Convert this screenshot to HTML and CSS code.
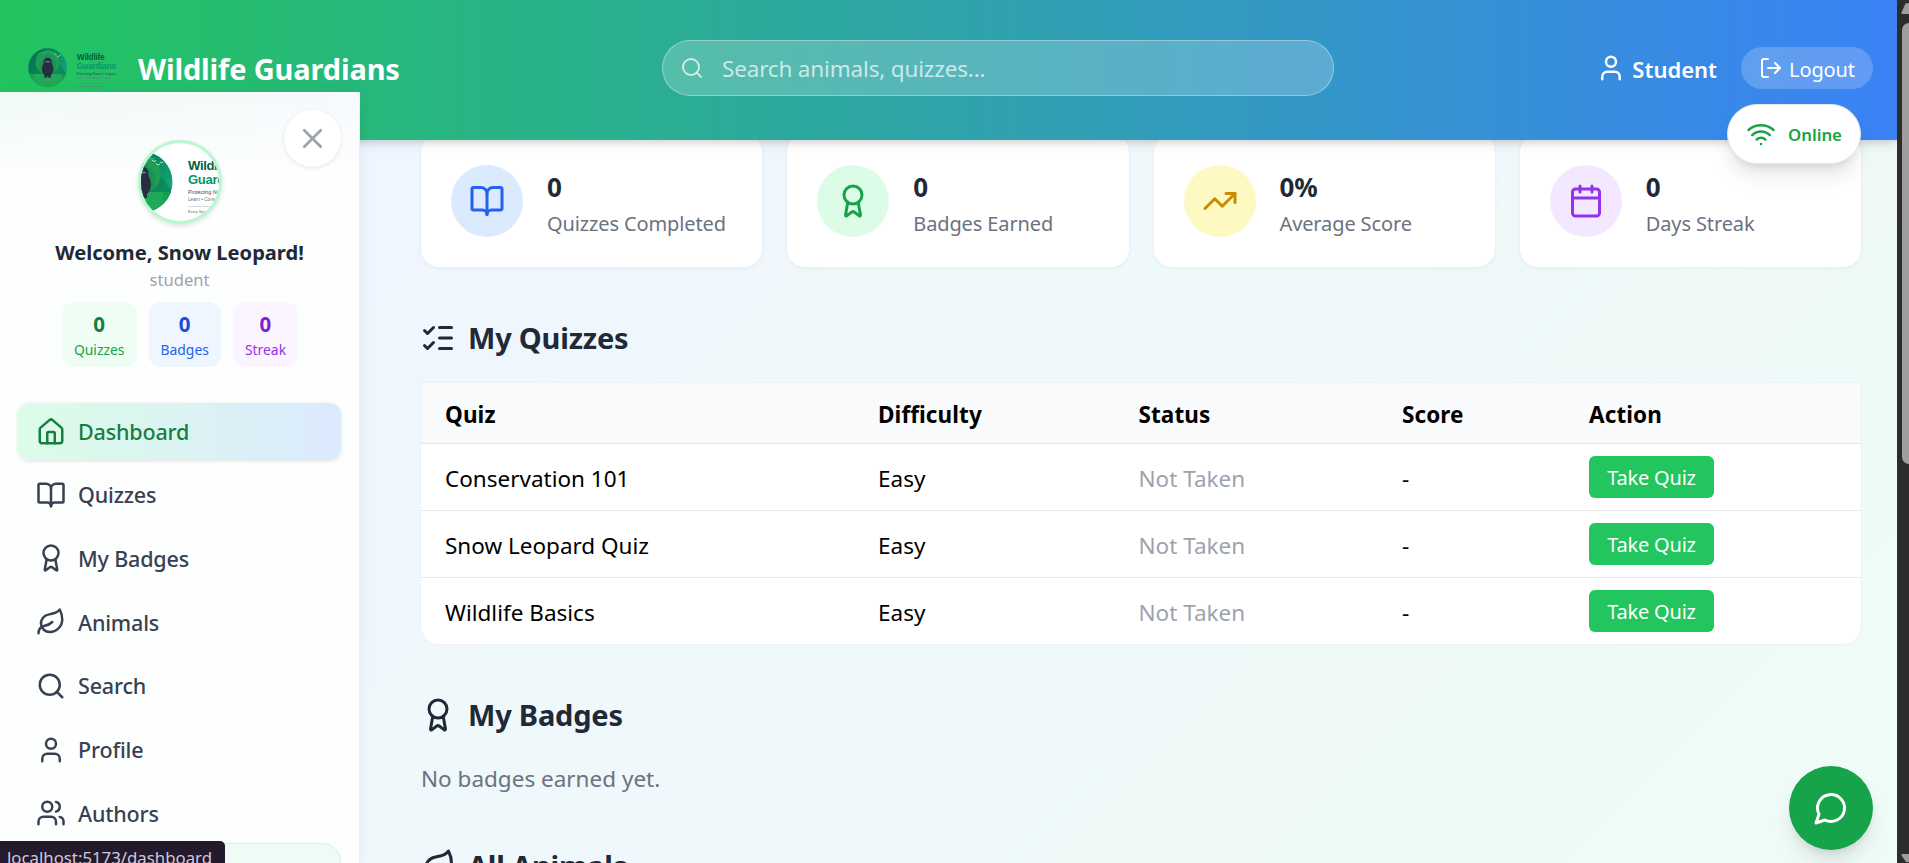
FILE: index.html
```html
<!DOCTYPE html>
<html lang="en">
<head>
<meta charset="utf-8">
<title>Wildlife Guardians</title>
<link rel="stylesheet" href="styles.css">
</head>
<body>
<svg class="defs" aria-hidden="true">
  <defs>
    <linearGradient id="ring" x1="0" y1="0" x2="1" y2="0.6">
      <stop offset="0" stop-color="#066a4d"/><stop offset="0.55" stop-color="#08875f"/><stop offset="1" stop-color="#12a87c"/>
    </linearGradient>
    <linearGradient id="land" x1="0" y1="0" x2="0" y2="1">
      <stop offset="0" stop-color="#159a52"/><stop offset="1" stop-color="#22a957"/>
    </linearGradient>
    <clipPath id="disc"><circle cx="31" cy="31" r="30.5"/></clipPath>
  </defs>
  <symbol id="logo" viewBox="0 0 145 64">
    <g clip-path="url(#disc)">
      <rect width="62" height="62" fill="url(#ring)"/>
      <path d="M0 41 12 27l9 12L31 3l12 28 6-7 13 18v20H0z" fill="#0a8153" opacity=".7"/>
      <circle cx="31" cy="23" r="19" fill="#1f9d55"/>
      <path d="M18 23 31 9l13 14v18H18z" fill="#168c4b" opacity=".5"/>
      <path d="M0 41h62v21H0z" fill="url(#land)"/>
      <path d="M10 41h42v21H10z" fill="#22a957"/>
    </g>
    <path d="m15 10 6-3 4 1 6-4 8 4 5-1" fill="none" stroke="#5cbf91" stroke-width=".7"/>
    <path d="m41 9 2 1.500 2-1m0 3 2 1.500 2-1m0-2 1.500 1 1.500-1" fill="none" stroke="#d5efe2" stroke-width=".9"/>
    <ellipse cx="31" cy="33" rx="9" ry="12" fill="#272e42"/>
    <circle cx="31" cy="22" r="6.500" fill="#272e42"/>
    <path d="M26 40h4v7h-4zM32 40h4v7h-4z" fill="#272e42"/>
    <path d="M27.500 21.500h7" stroke="#8790a3" stroke-width="1.600"/>
    <text x="77" y="18.500" class="logo-name logo-dark">Wildlife</text>
    <text x="77" y="32.500" class="logo-name logo-mid">Guardians</text>
    <text x="77" y="42.500" class="logo-tag">Protecting Nature's Legacy</text>
    <text x="77" y="49.500" class="logo-line">Learn • Conserve • Inspire</text>
    <path d="M77 55.500h62" stroke="#6b7280" stroke-opacity=".35" stroke-width=".8"/>
    <text x="77" y="61.500" class="logo-small">Every Species Matters</text>
  </symbol>
  <symbol id="search" viewBox="0 0 24 24"><path d="m21 21-4.340-4.340"/><circle cx="11" cy="11" r="8"/></symbol>
  <symbol id="user" viewBox="0 0 24 24"><path d="M19 21v-2a4 4 0 0 0-4-4H9a4 4 0 0 0-4 4v2"/><circle cx="12" cy="7" r="4"/></symbol>
  <symbol id="users" viewBox="0 0 24 24"><path d="M16 21v-2a4 4 0 0 0-4-4H6a4 4 0 0 0-4 4v2"/><path d="M16 3.128a4 4 0 0 1 0 7.744"/><path d="M22 21v-2a4 4 0 0 0-3-3.870"/><circle cx="9" cy="7" r="4"/></symbol>
  <symbol id="logout" viewBox="0 0 24 24"><path d="m16 17 5-5-5-5"/><path d="M21 12H9"/><path d="M9 21H5a2 2 0 0 1-2-2V5a2 2 0 0 1 2-2h4"/></symbol>
  <symbol id="wifi" viewBox="0 0 24 24"><path d="M12 20h.01"/><path d="M2 8.820a15 15 0 0 1 20 0"/><path d="M5 12.859a10 10 0 0 1 14 0"/><path d="M8.500 16.429a5 5 0 0 1 7 0"/></symbol>
  <symbol id="close" viewBox="0 0 24 24"><path d="M18 6 6 18"/><path d="m6 6 12 12"/></symbol>
  <symbol id="house" viewBox="0 0 24 24"><path d="M15 21v-8a1 1 0 0 0-1-1h-4a1 1 0 0 0-1 1v8"/><path d="M3 10a2 2 0 0 1 .709-1.528l7-5.999a2 2 0 0 1 2.582 0l7 5.999A2 2 0 0 1 21 10v9a2 2 0 0 1-2 2H5a2 2 0 0 1-2-2z"/></symbol>
  <symbol id="book" viewBox="0 0 24 24"><path d="M12 7v14"/><path d="M3 18a1 1 0 0 1-1-1V4a1 1 0 0 1 1-1h5a4 4 0 0 1 4 4 4 4 0 0 1 4-4h5a1 1 0 0 1 1 1v13a1 1 0 0 1-1 1h-6a3 3 0 0 0-3 3 3 3 0 0 0-3-3z"/></symbol>
  <symbol id="award" viewBox="0 0 24 24"><path d="m15.477 12.890 1.515 8.526a.5.5 0 0 1-.81.470l-3.580-2.687a1 1 0 0 0-1.197 0l-3.586 2.686a.5.5 0 0 1-.81-.469l1.514-8.526"/><circle cx="12" cy="8" r="6"/></symbol>
  <symbol id="leaf" viewBox="0 0 24 24"><path d="M11 20A7 7 0 0 1 9.800 6.100C15.500 5 17 4.480 19 2c1 2 2 4.180 2 8 0 5.500-4.780 10-10 10Z"/><path d="M2 21c0-3 1.850-5.360 5.080-6C9.500 14.520 12 13 13 12"/></symbol>
  <symbol id="trend" viewBox="0 0 24 24"><path d="M16 7h6v6"/><path d="m22 7-8.500 8.500-5-5L2 17"/></symbol>
  <symbol id="calendar" viewBox="0 0 24 24"><path d="M8 2v4"/><path d="M16 2v4"/><rect width="18" height="18" x="3" y="4" rx="2"/><path d="M3 10h18"/></symbol>
  <symbol id="checks" viewBox="0 0 24 24"><path d="M13 5h8"/><path d="M13 12h8"/><path d="M13 19h8"/><path d="m3 17 2 2 4-4"/><path d="m3 7 2 2 4-4"/></symbol>
  <symbol id="message" viewBox="0 0 24 24"><path d="M7.900 20A9 9 0 1 0 4 16.100L2 22Z"/></symbol>
</svg>

<div class="app">
  <div class="page">
    <header class="topbar">
      <div class="brand">
        <svg class="brand-logo"><use href="#logo"/></svg>
        <span class="brand-name">Wildlife Guardians</span>
      </div>
      <div class="searchbox">
        <svg class="icon icon-24"><use href="#search"/></svg>
        <span>Search animals, quizzes...</span>
      </div>
      <div class="account">
        <svg class="icon icon-30"><use href="#user"/></svg>
        <span class="role">Student</span>
        <button class="logout"><svg class="icon icon-24"><use href="#logout"/></svg><span>Logout</span></button>
      </div>
    </header>

    <main class="content">
      <section class="cards">
        <article class="card"><div class="bubble blue"><svg class="icon icon-36"><use href="#book"/></svg></div><div class="card-text"><strong>0</strong><span>Quizzes Completed</span></div></article>
        <article class="card"><div class="bubble green"><svg class="icon icon-36"><use href="#award"/></svg></div><div class="card-text"><strong>0</strong><span>Badges Earned</span></div></article>
        <article class="card"><div class="bubble yellow"><svg class="icon icon-36"><use href="#trend"/></svg></div><div class="card-text"><strong>0%</strong><span>Average Score</span></div></article>
        <article class="card"><div class="bubble purple"><svg class="icon icon-36"><use href="#calendar"/></svg></div><div class="card-text"><strong>0</strong><span>Days Streak</span></div></article>
      </section>

      <h2 class="heading"><svg class="icon icon-36"><use href="#checks"/></svg>My Quizzes</h2>
      <div class="table">
        <div class="row head"><span>Quiz</span><span>Difficulty</span><span>Status</span><span>Score</span><span>Action</span></div>
        <div class="row"><span>Conservation 101</span><span>Easy</span><span class="muted">Not Taken</span><span>-</span><button class="take">Take Quiz</button></div>
        <div class="row"><span>Snow Leopard Quiz</span><span>Easy</span><span class="muted">Not Taken</span><span>-</span><button class="take">Take Quiz</button></div>
        <div class="row"><span>Wildlife Basics</span><span>Easy</span><span class="muted">Not Taken</span><span>-</span><button class="take">Take Quiz</button></div>
      </div>

      <h2 class="heading"><svg class="icon icon-36"><use href="#award"/></svg>My Badges</h2>
      <p class="empty">No badges earned yet.</p>

      <h2 class="heading"><svg class="icon icon-36"><use href="#leaf"/></svg>All Animals</h2>
    </main>
  </div>

  <div class="scrollbar">
    <svg class="arrow" viewBox="0 0 12 12"><path d="M8.500 1.500 12 1V12H5.500Q4 12 4.500 10.500Z"/></svg>
    <div class="thumb"></div>
    <svg class="arrow arrow-down" viewBox="0 0 12 12"><path d="M5.500 3H12V11H9L4.500 4.500Q4.500 3 5.500 3Z"/></svg>
  </div>
</div>

<aside class="sidebar">
  <button class="close"><svg class="icon icon-33"><use href="#close"/></svg></button>
  <div class="profile">
    <div class="avatar"><svg class="avatar-logo"><use href="#logo"/></svg></div>
    <div class="welcome">Welcome, Snow Leopard!</div>
    <div class="kind">student</div>
    <div class="stats">
      <div class="stat stat-green"><b>0</b><span>Quizzes</span></div>
      <div class="stat stat-blue"><b>0</b><span>Badges</span></div>
      <div class="stat stat-purple"><b>0</b><span>Streak</span></div>
    </div>
  </div>
  <nav class="nav">
    <a class="item active"><svg class="icon icon-30"><use href="#house"/></svg>Dashboard</a>
    <a class="item"><svg class="icon icon-30"><use href="#book"/></svg>Quizzes</a>
    <a class="item"><svg class="icon icon-30"><use href="#award"/></svg>My Badges</a>
    <a class="item"><svg class="icon icon-30"><use href="#leaf"/></svg>Animals</a>
    <a class="item"><svg class="icon icon-30"><use href="#search"/></svg>Search</a>
    <a class="item"><svg class="icon icon-30"><use href="#user"/></svg>Profile</a>
    <a class="item"><svg class="icon icon-30"><use href="#users"/></svg>Authors</a>
  </nav>
  <div class="tip"></div>
</aside>

<div class="online"><svg class="icon icon-30"><use href="#wifi"/></svg><span>Online</span></div>
<button class="chat"><svg class="icon icon-36"><use href="#message"/></svg></button>
<div class="linkbar">localhost:5173/dashboard</div>
</body>
</html>
```
FILE: styles.css
```css
* { box-sizing: border-box; }

body {
  margin: 0;
  height: 863px;
  overflow: hidden;
  position: relative;
  font-family: "Noto Sans", "Open Sans", sans-serif;
  color: #000;
}

button { border: 0; padding: 0; font: inherit; color: inherit; }

.defs { position: absolute; width: 0; height: 0; }

.icon {
  flex: none;
  fill: none;
  stroke: currentColor;
  stroke-width: 2;
  stroke-linecap: round;
  stroke-linejoin: round;
}
.icon-24 { width: 24px; height: 24px; }
.icon-30 { width: 30px; height: 30px; }
.icon-33 { width: 33px; height: 33px; }
.icon-36 { width: 36px; height: 36px; }

.logo-name { font: bold 13.1px "Liberation Sans", sans-serif; letter-spacing: -.35px; }
.logo-dark { fill: #065f46; }
.logo-mid { fill: #059669; }
.logo-tag { font: italic 5.2px "Liberation Sans", sans-serif; fill: #374151; }
.logo-line { font: 4.7px "Liberation Sans", sans-serif; fill: #6b7280; }
.logo-small { font: 3.8px "Liberation Sans", sans-serif; fill: #6b7280; }

.app { display: flex; height: 863px; overflow: hidden; }
.page {
  position: relative;
  flex: 1;
  overflow: hidden;
  background: linear-gradient(135deg, #eff6ff 24%, #eff8fb 42%, #eff8fa 60%, #eefbf6 88%);
}

/* Top bar */
.topbar {
  position: absolute;
  inset: 0 0 auto 0;
  z-index: 2;
  height: 140px;
  padding: 0 24px 4px 28px;
  display: grid;
  grid-template-columns: 634px 672px 1fr;
  align-items: center;
  background: linear-gradient(to right, #22c55e, #3b82f6);
  box-shadow: 0 6px 9px -1px rgba(0, 0, 0, .1), 0 3px 6px -2px rgba(0, 0, 0, .1);
  color: #fff;
}
.brand { display: flex; align-items: center; gap: 18px; }
.brand-logo { width: 92px; height: 40.600px; }
.brand-name { font-size: 29px; font-weight: 700; letter-spacing: -.15px; line-height: 40px; padding-top: 2px; }
.searchbox {
  height: 56px;
  display: flex;
  align-items: center;
  gap: 18px;
  padding: 0 17px;
  border: 1px solid rgba(255, 255, 255, .35);
  border-radius: 28px;
  background: rgba(255, 255, 255, .2);
  color: rgba(255, 255, 255, .7);
  font-size: 22.500px;
  letter-spacing: -.17px;
}
.searchbox span { padding-top: 1px; }
.account { display: flex; align-items: center; justify-content: flex-end; }
.role { font-size: 22px; font-weight: 600; margin: 0 24px 0 6px; padding-top: 1px; }
.logout {
  height: 42px;
  display: flex;
  align-items: center;
  gap: 6px;
  padding: 0 18px;
  border-radius: 21px;
  background: rgba(255, 255, 255, .2);
  font-size: 20px;
  letter-spacing: -.1px;
}
.logout span { padding-top: 2px; }

/* Dashboard */
.content { padding: 134px 36px 0 421px; }
.cards { display: grid; grid-template-columns: repeat(4, 1fr); gap: 25px; }
.card {
  height: 133px;
  display: flex;
  align-items: center;
  gap: 24px;
  padding: 0 30px;
  border-radius: 18px;
  background: #fff;
  box-shadow: 0 1px 4px rgba(0, 0, 0, .06);
}
.bubble { width: 72px; height: 72px; border-radius: 50%; display: grid; place-items: center; flex: none; }
.blue { background: #dbeafe; color: #2563eb; }
.green { background: #dcfce7; color: #16a34a; }
.yellow { background: #fef9c3; color: #ca8a04; }
.purple { background: #f3e8ff; color: #9333ea; }
.card-text { display: flex; flex-direction: column; padding-top: 10px; line-height: 36.500px; white-space: nowrap; }
.card-text strong { font-size: 26px; color: #1f2937; letter-spacing: 0; }
.card-text span { font-size: 20px; letter-spacing: -.12px; color: #6b7280; }

.heading {
  margin: 52px 0 0 -1px;
  display: flex;
  align-items: center;
  gap: 12px;
  line-height: 37px;
  font-size: 29px;
  font-weight: 700;
  letter-spacing: -.2px;
  color: #1f2937;
}
.table {
  margin-top: 27px;
  height: 261px;
  border-radius: 0 0 18px 18px;
  background: #fff;
  box-shadow: 0 0 0 1px #edf2f5;
  font-size: 22.500px;
}
.row {
  height: 67px;
  display: grid;
  grid-template-columns: 433px 260.500px 263.500px 187px 125px;
  align-items: center;
  padding-left: 24px;
  border-bottom: 1px solid #e5e7eb;
}
.row:last-child { border-bottom: 0; height: 66px; }
.row span { padding-top: 2px; letter-spacing: 0; }
.head { height: 61px; background: #f9fafb; font-weight: 700; }
.row.head span { padding-top: 3px; letter-spacing: .1px; }
.row .muted { color: #9ca3af; }
.take {
  height: 42px;
  border-radius: 6px;
  background: #22c55e;
  color: #fff;
  font-size: 20px;
  letter-spacing: -.2px;
  line-height: 40px;
  padding-top: 2px;
}
.empty { margin: 28px 0 0; font-size: 22.500px; line-height: 36px; color: #6b7280; }
.empty + .heading { margin-top: 50px; }

/* Window scrollbar */
.scrollbar { width: 12px; background: #2c2c2c; padding: 2px 0 0; display: flex; flex-direction: column; }
.arrow { width: 12px; height: 12px; fill: #9e9e9e; flex: none; }
.thumb { margin: 9px 0 0 5px; height: 444px; border-radius: 8px 0 0 8px; background: #9e9e9e; }
.arrow-down { margin-top: 387px; }

/* Sidebar */
.sidebar {
  position: absolute;
  left: 0;
  top: 92px;
  z-index: 3;
  width: 360px;
  height: 771px;
  overflow: hidden;
  padding: 48px 18px 0;
  border-right: 1px solid #eceff2;
  background:
    linear-gradient(to bottom, rgba(253, 254, 254, 0), #fdfefe 80px),
    linear-gradient(to right, #f0faf5, #f7f9fd);
  box-shadow: 0 0 16px rgba(0, 0, 0, .06);
}
.close {
  position: absolute;
  left: 284px;
  top: 18px;
  width: 57px;
  height: 57px;
  border-radius: 50%;
  display: grid;
  place-items: center;
  background: #fff;
  color: #9ca3af;
  box-shadow: 0 1px 4px rgba(0, 0, 0, .1);
}
.profile { display: flex; flex-direction: column; align-items: center; }
.avatar {
  width: 84px;
  height: 84px;
  overflow: hidden;
  border: 3px solid #bbf7d0;
  border-radius: 50%;
  background: #fff;
  box-shadow: 0 2px 5px rgba(0, 0, 0, .12);
}
.avatar-logo { display: block; width: 145px; height: 64px; margin: 8px 0 0 -30px; }
.welcome { margin-top: 13px; font-size: 20.100px; font-weight: 700; line-height: 31px; color: #1f2937; white-space: nowrap; }
.kind { font-size: 16.600px; line-height: 24px; color: #9ca3af; }
.stats { display: flex; gap: 12px; margin: 10px 0 0 1px; }
.stat {
  height: 65px;
  display: flex;
  flex-direction: column;
  align-items: center;
  padding: 10px 12px 0;
  border-radius: 12px;
  font-size: 13.900px;
  line-height: 26px;
}
.stat b { font-size: 20.500px; line-height: 25px; }
.stat-green { background: #f0fdf4; color: #16a34a; }
.stat-green b { color: #15803d; }
.stat-blue { background: #eff6ff; color: #2563eb; }
.stat-blue b { color: #1d4ed8; }
.stat-purple { background: #faf5ff; color: #9333ea; }
.stat-purple b { color: #7e22ce; }
.nav { display: flex; flex-direction: column; gap: 6.750px; margin-top: 36px; }
.item {
  height: 57px;
  display: flex;
  align-items: center;
  gap: 12px;
  padding: 0 18px;
  border-radius: 12px;
  font-size: 21.500px;
  font-weight: 500;
  letter-spacing: -.17px;
  color: #374151;
}
.item:not(.active) { padding-bottom: 1.500px; }
.active {
  background: linear-gradient(to right, #dcfce7, #dbeafe);
  color: #15803d;
  box-shadow: 0 1px 4px rgba(0, 0, 0, .12);
}
.tip {
  height: 90px;
  border: 1px solid #dbeafe;
  border-radius: 18px;
  background: linear-gradient(to right, #f0fdf4, #effcf6);
}

/* Floating elements */
.online {
  position: absolute;
  left: 1727px;
  top: 104px;
  z-index: 4;
  width: 134px;
  height: 60px;
  display: flex;
  align-items: center;
  gap: 12px;
  padding-left: 18px;
  border: 1px solid #e5e7eb;
  border-radius: 30px;
  background: #fff;
  color: #16a34a;
  font-size: 16.800px;
  font-weight: 600;
  box-shadow: 0 15px 22px -4px rgba(0, 0, 0, .1), 0 6px 9px -4px rgba(0, 0, 0, .1);
}
.chat {
  position: absolute;
  left: 1789px;
  top: 766px;
  z-index: 4;
  width: 84px;
  height: 84px;
  display: grid;
  place-items: center;
  border-radius: 50%;
  background: #16a34a;
  color: #fff;
  box-shadow: 0 15px 22px -4px rgba(0, 0, 0, .1), 0 6px 9px -4px rgba(0, 0, 0, .1);
}
.linkbar {
  position: absolute;
  left: 0;
  top: 841px;
  z-index: 5;
  width: 225px;
  height: 22px;
  overflow: hidden;
  padding: 4px 0 0 7px;
  border-radius: 0 5px 0 0;
  background: #241a2e;
  color: #cfc9d8;
  font-size: 16.800px;
  line-height: 25px;
  white-space: nowrap;
}
```
